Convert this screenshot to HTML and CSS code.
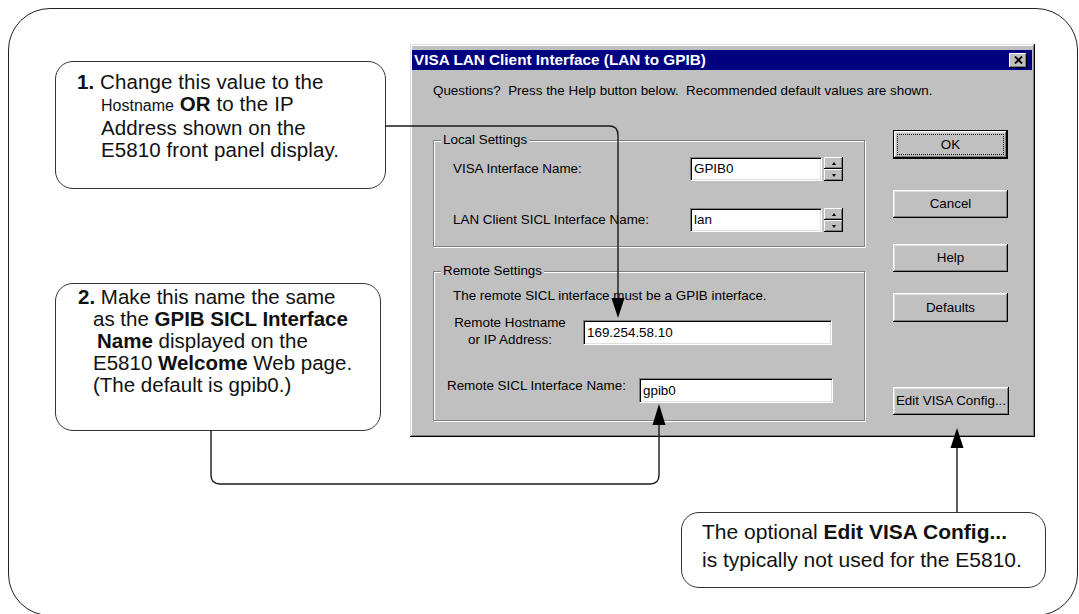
FILE: index.html
```html
<!DOCTYPE html>
<html lang="en">
<head>
<meta charset="utf-8">
<title>VISA LAN Client Interface</title>
<link rel="stylesheet" href="styles.css">
</head>
<body>
<div class="canvas">
  <div class="frame"></div>

  <div class="callout c1">
    <p><b>1.</b> Change this value to the<br><span class="small">Hostname</span> <b>OR</b> to the IP<br>Address shown on the<br>E5810 front panel display.</p>
  </div>

  <div class="callout c2">
    <p><b>2.</b> Make this name the same<br>as the <b>GPIB SICL Interface</b><br><b class="nudge">Name</b> displayed on the<br>E5810 <b>Welcome</b> Web page.<br>(The default is gpib0.)</p>
  </div>

  <div class="callout c3">
    <p>The optional <b>Edit VISA Config...</b><br>is typically not used for the E5810.</p>
  </div>

  <div class="dialog">
    <div class="titlebar">
      <span class="title">VISA LAN Client Interface (LAN to GPIB)</span>
      <span class="close"><svg width="9" height="8" viewBox="0 0 9 8"><path d="M1 0.5 L8 7.5 M8 0.5 L1 7.5" stroke="#000" stroke-width="1.8" fill="none"/></svg></span>
    </div>
    <div class="dlg-body">
      <p class="intro">Questions?&nbsp; Press the Help button below.&nbsp; Recommended default values are shown.</p>
      <div class="dlg-main">
        <div class="groups">
          <div class="group local">
            <span class="legend">Local Settings</span>
            <div class="row">
              <span class="label">VISA Interface Name:</span>
              <span class="field spin-field">GPIB0</span>
              <span class="spinner"><span class="spin up"><i></i></span><span class="spin down"><i></i></span></span>
            </div>
            <div class="row">
              <span class="label">LAN Client SICL Interface Name:</span>
              <span class="field spin-field">lan</span>
              <span class="spinner"><span class="spin up"><i></i></span><span class="spin down"><i></i></span></span>
            </div>
          </div>
          <div class="group remote">
            <span class="legend">Remote Settings</span>
            <p class="remote-note">The remote SICL interface must be a GPIB interface.</p>
            <div class="host-row">
              <span class="host-label">Remote Hostname<br>or IP Address:</span>
              <span class="field host-field">169.254.58.10</span>
            </div>
            <div class="sicl-row">
              <span class="sicl-label">Remote SICL Interface Name:</span>
              <span class="field sicl-field">gpib0</span>
            </div>
          </div>
        </div>
        <div class="buttons">
          <span class="btn ok"><span class="focus">OK</span></span>
          <span class="btn cancel">Cancel</span>
          <span class="btn help">Help</span>
          <span class="btn defaults">Defaults</span>
          <span class="btn edit">Edit VISA Config...</span>
        </div>
      </div>
    </div>
  </div>

  <svg class="connectors" width="1079" height="614" viewBox="0 0 1079 614">
    <g fill="none" stroke="#1a1a1a" stroke-width="1.4">
      <path d="M385 126 H609 Q618 126 618 135 V300"/>
      <path d="M211 430 V475 Q211 484 220 484 H650 Q659 484 659 475 V424"/>
      <path d="M957 512 V446"/>
    </g>
    <g fill="#000">
      <polygon points="611.5,298 624.5,298 618,318"/>
      <polygon points="652.5,425 665.5,425 659,404"/>
      <polygon points="950.5,448 963.5,448 957,428"/>
    </g>
  </svg>
</div>
</body>
</html>
```

FILE: styles.css
```css
html, body {
  margin: 0;
  padding: 0;
  background: #ffffff;
}

body {
  font-family: "Liberation Sans", Arial, sans-serif;
  color: #000;
}

.canvas {
  position: relative;
  width: 1079px;
  height: 614px;
  overflow: hidden;
  background: #fff;
}

.frame {
  position: absolute;
  left: 8px;
  top: 8px;
  width: 1070px;
  height: 608px;
  box-sizing: border-box;
  border: 1px solid #222;
  border-radius: 42px;
}

/* Callouts */
.callout {
  position: absolute;
  box-sizing: border-box;
  border: 1px solid #333;
  border-radius: 18px;
  background: #fff;
  color: #111;
  font-size: 20.5px;
  line-height: 22px;
}

.callout p {
  margin: 0;
}

.c1 {
  left: 55px;
  top: 61px;
  width: 331px;
  height: 128px;
  padding: 9px 0 0 45px;
  text-indent: -24px;
  letter-spacing: 0.1px;
}

.c1 .small {
  font-size: 16px;
  letter-spacing: 0;
}

.c2 {
  left: 55px;
  top: 283px;
  width: 326px;
  height: 148px;
  padding: 2px 0 0 37px;
  text-indent: -15px;
}

.c2 .nudge {
  margin-left: 4px;
}

.c3 {
  left: 681px;
  top: 512px;
  width: 365px;
  height: 76px;
  padding: 5px 0 0 20px;
  font-size: 21px;
  line-height: 28px;
}

/* Connectors */
.connectors {
  position: absolute;
  left: 0;
  top: 0;
  pointer-events: none;
}

/* Dialog */
.dialog {
  position: absolute;
  left: 410px;
  top: 44px;
  width: 625px;
  height: 393px;
  box-sizing: border-box;
  padding: 6px 3px 3px 2px;
  background: #c0c0c0;
  box-shadow: inset -1px -1px 0 #000, inset 1px 1px 0 #dfdfdf,
              inset -2px -2px 0 #808080, inset 2px 2px 0 #fff;
  font-size: 13.4px;
  line-height: 16px;
  color: #000;
}

.titlebar {
  height: 20px;
  background: #000080;
  color: #fff;
  display: flex;
  align-items: center;
  justify-content: space-between;
  padding: 0 5px 0 2px;
  font-weight: bold;
  font-size: 15.3px;
}

.close {
  box-sizing: border-box;
  width: 18px;
  height: 15px;
  background: #c0c0c0;
  display: flex;
  align-items: center;
  justify-content: center;
  box-shadow: inset -1px -1px 0 #000, inset 1px 1px 0 #fff,
              inset -2px -2px 0 #808080;
}

.dlg-body {
  padding: 13px 0 0 21px;
}

.intro {
  margin: 0;
}

.dlg-main {
  display: flex;
  margin-top: 31px;
}

.groups {
  width: 432px;
  padding-top: 10px;
}

.group {
  position: relative;
  box-sizing: border-box;
  border: 1px solid #808080;
  box-shadow: inset 1px 1px 0 #fff, 1px 1px 0 #fff;
}

.legend {
  position: absolute;
  left: 7px;
  top: -9px;
  padding: 0 2px;
  background: #c0c0c0;
}

.local {
  height: 107px;
  padding: 16px 0 0 19px;
}

.row {
  display: grid;
  grid-template-columns: 237px 134px 19px;
  align-items: center;
  height: 24px;
}

.row + .row {
  margin-top: 27px;
}

.field {
  box-sizing: border-box;
  display: flex;
  align-items: center;
  padding-left: 3px;
  background: #fff;
  border: 1px solid;
  border-color: #808080 #fff #fff #808080;
  box-shadow: inset 1px 1px 0 #000, inset -1px -1px 0 #dfdfdf;
}

.spin-field {
  width: 132px;
  height: 24px;
}

.spinner {
  display: flex;
  flex-direction: column;
  width: 19px;
  height: 24px;
}

.spin {
  box-sizing: border-box;
  flex: 1;
  display: flex;
  align-items: center;
  justify-content: center;
  background: #c0c0c0;
  box-shadow: inset -1px -1px 0 #000, inset 1px 1px 0 #fff,
              inset -2px -2px 0 #808080;
}

.spin i {
  width: 0;
  height: 0;
  border-left: 2.5px solid transparent;
  border-right: 2.5px solid transparent;
}

.spin.up i {
  border-bottom: 3px solid #000;
}

.spin.down i {
  border-top: 3px solid #000;
}

.remote {
  height: 150px;
  margin-top: 24px;
  padding: 16px 0 0 19px;
}

.remote-note {
  margin: 0;
}

.host-row {
  display: flex;
  margin-top: 10px;
}

.host-label {
  width: 114px;
  margin-right: 16px;
  text-align: center;
  line-height: 17px;
  white-space: nowrap;
}

.host-field {
  width: 249px;
  height: 25px;
  margin-top: 6px;
}

.sicl-row {
  display: flex;
  margin-top: 30px;
  margin-left: -6px;
}

.sicl-label {
  width: 192px;
  white-space: nowrap;
}

.sicl-field {
  width: 194px;
  height: 25px;
}

/* Buttons */
.buttons {
  display: flex;
  flex-direction: column;
  align-items: flex-start;
  margin-left: 28px;
  width: 116px;
}

.btn {
  box-sizing: border-box;
  width: 115px;
  height: 28px;
  display: flex;
  align-items: center;
  justify-content: center;
  background: #c0c0c0;
  box-shadow: inset -1px -1px 0 #000, inset 1px 1px 0 #fff,
              inset -2px -2px 0 #808080, inset 2px 2px 0 #dfdfdf;
  white-space: nowrap;
}

.btn.ok {
  height: 29px;
  border: 1px solid #000;
  padding: 3px;
}

.btn.ok .focus {
  box-sizing: border-box;
  width: 100%;
  height: 100%;
  display: flex;
  align-items: center;
  justify-content: center;
  border: 1px dotted #000;
}

.btn.cancel {
  margin-top: 31px;
}

.btn.help {
  margin-top: 26px;
}

.btn.defaults {
  margin-top: 21px;
  height: 29px;
}

.btn.edit {
  margin-top: 65px;
  width: 116px;
}
```
